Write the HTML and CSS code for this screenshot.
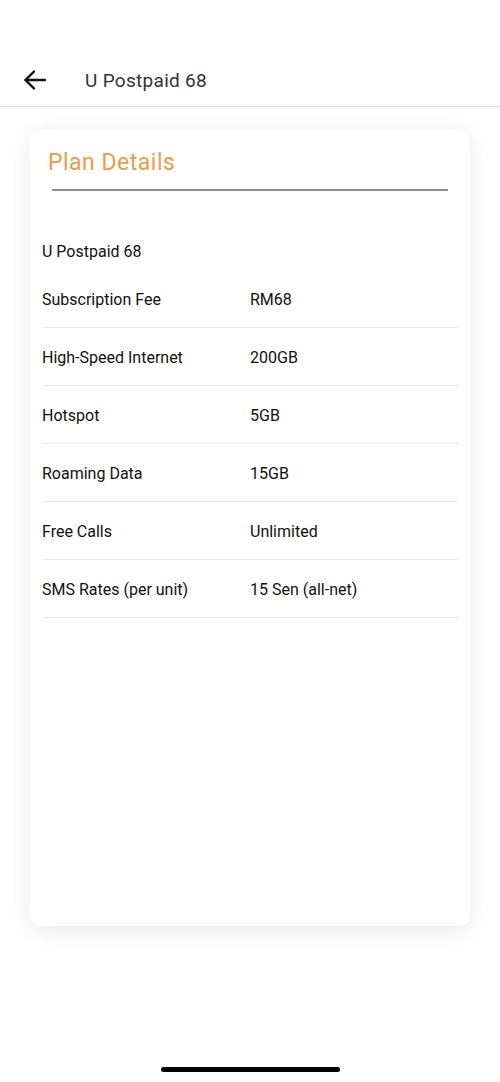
FILE: index.html
```html
<!DOCTYPE html>
<html lang="en">
<head>
  <meta charset="UTF-8">
  <meta name="viewport" content="width=device-width, initial-scale=1.0">
  <title>U Postpaid 68</title>
  <link rel="stylesheet" href="styles.css">
</head>
<body>
  <header class="topbar">
    <div class="back">
      <svg width="24" height="24" viewBox="0 0 24 24" fill="none" stroke="#111" stroke-width="2.4" stroke-linecap="round" stroke-linejoin="round">
        <path d="M22 12H2.5"/>
        <path d="M11 3.5L2.5 12L11 20.5"/>
      </svg>
    </div>
    <h1>U Postpaid 68</h1>
  </header>

  <main class="page">
    <div class="card">
      <h2 class="card-title">Plan Details</h2>
      <div class="title-line"></div>

      <div class="plan-name">U Postpaid 68</div>

      <div class="row"><span class="label">Subscription Fee</span><span class="value">RM68</span></div>
      <div class="row"><span class="label">High-Speed Internet</span><span class="value">200GB</span></div>
      <div class="row"><span class="label">Hotspot</span><span class="value">5GB</span></div>
      <div class="row"><span class="label">Roaming Data</span><span class="value">15GB</span></div>
      <div class="row"><span class="label">Free Calls</span><span class="value">Unlimited</span></div>
      <div class="row"><span class="label">SMS Rates (per unit)</span><span class="value">15 Sen (all-net)</span></div>
    </div>
  </main>

  <div class="home-bar"></div>
</body>
</html>
```

FILE: styles.css
```css
body {
  margin: 0;
  font-family: Roboto, "Noto Sans", sans-serif;
  background: #fff;
  color: #111;
  height: 1082px;
  display: flex;
  flex-direction: column;
}
.topbar {
  display: flex;
  align-items: center;
  height: 53px;
  margin-top: 54px;
  border-bottom: 1px solid #dcdcdc;
  box-sizing: border-box;
  padding-left: 23px;
}
.back {
  width: 24px;
  height: 24px;
}
.back svg {
  display: block;
}
.topbar h1 {
  margin: 0 0 0 38px;
  font-size: 19px;
  font-weight: 400;
  color: #333;
  letter-spacing: 0.3px;
}
.page {
  flex: 1;
  padding: 23px 30px 0;
}
.card {
  background: #fff;
  border-radius: 12px;
  height: 796px;
  box-shadow: 0 4px 22px rgba(0, 0, 0, 0.09);
  padding: 0 12px;
  box-sizing: border-box;
}
.card-title {
  margin: 0;
  padding: 19px 0 0 6px;
  font-size: 23px;
  font-weight: 400;
  color: #f29a45;
  line-height: 28px;
  letter-spacing: 0.5px;
}
.title-line {
  height: 2px;
  background: #8f8f8f;
  margin: 12px 10px 0;
}
.plan-name {
  font-size: 16px;
  margin-top: 51px;
  margin-bottom: 8px;
  line-height: 20px;
}
.row {
  display: flex;
  align-items: center;
  height: 58px;
  border-bottom: 1px solid #e8e8e8;
  font-size: 16px;
  box-sizing: border-box;
  padding-top: 1px;
}
.label {
  width: 208px;
}
.home-bar {
  width: 179px;
  height: 5px;
  border-radius: 3px;
  background: #000;
  margin: 0 auto 10px;
}
```
